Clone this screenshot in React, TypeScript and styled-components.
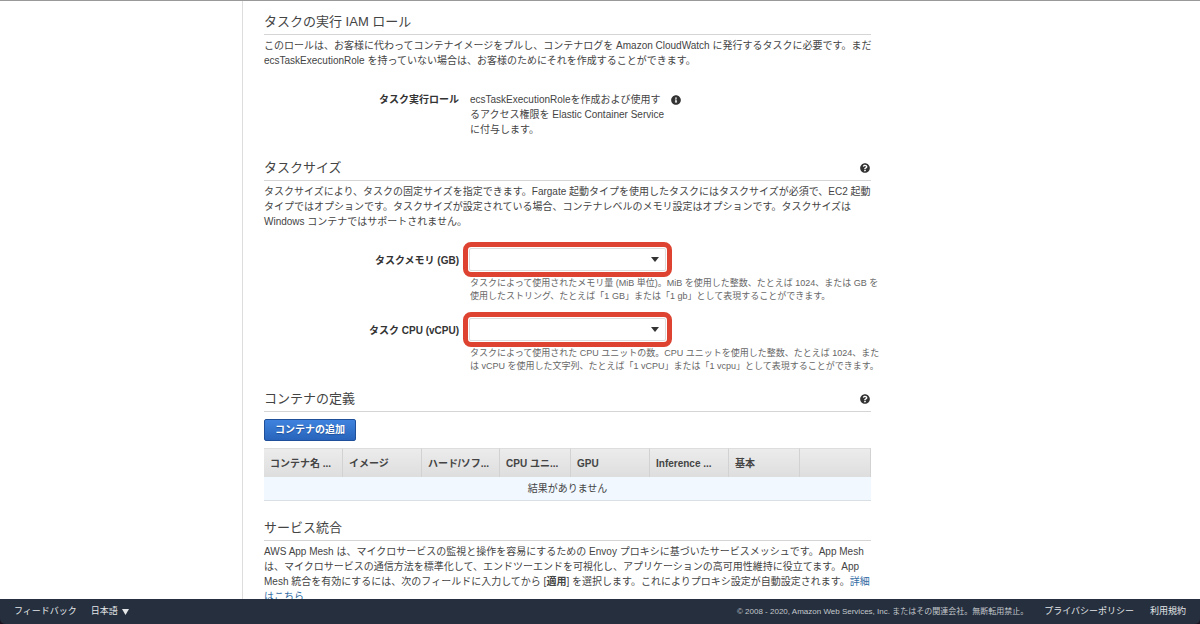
import React from "react";
import styled, { createGlobalStyle } from "styled-components";
import { FaInfoCircle, FaQuestionCircle } from "react-icons/fa";

const GlobalStyle = createGlobalStyle`
  *, *::before, *::after { box-sizing: border-box; }
  body {
    margin: 0;
    background: #1c1220;
    color: #444;
    font-family: "Liberation Sans", "Noto Sans CJK JP", sans-serif;
    font-size: 10px;
    line-height: 15px;
  }
`;

const Shell = styled.div`
  display: flex;
  flex-direction: column;
  height: 100vh;
`;

const Scroller = styled.div`
  flex: 1;
  min-height: 0;
  display: flex;
  background: #fff;
  border-top: 1px solid #999;
  overflow-y: auto;
  scrollbar-width: none;
`;

const SideRail = styled.div`
  flex: 0 0 242px;
`;

const Main = styled.main`
  flex: 1;
  min-width: 0;
  height: max-content;
  border-left: 1px solid #ddd;
  padding: 12px 22px 24px 21px;
`;

const Section = styled.section<{ $after: number }>`
  max-width: 607px;
  margin-bottom: ${(p) => p.$after}px;
`;

const SectionHead = styled.div`
  display: flex;
  align-items: center;
  justify-content: space-between;
  height: 22px;
  padding: 0 1px 3px 0;
  border-bottom: 1px solid #d5d5d5;
`;

const Title = styled.h2`
  margin: 0;
  font-size: 13px;
  font-weight: 400;
  line-height: 18px;
  white-space: nowrap;
`;

const IconButton = styled.button`
  display: flex;
  padding: 0;
  border: 0;
  background: none;
  color: #333;
  font-size: 10px;
`;

const Text = styled.p`
  margin: 3px 0 0;
  white-space: nowrap;
`;

const Row = styled.div<{ $before: number }>`
  display: grid;
  grid-template-columns: 195px 1fr;
  column-gap: 11px;
  margin-top: ${(p) => p.$before}px;
`;

const Label = styled.label<{ $lines: number }>`
  color: #333;
  font-weight: 700;
  line-height: ${(p) => p.$lines}px;
  text-align: right;
`;

const RoleValue = styled.div`
  display: flex;
  align-items: flex-start;
  white-space: nowrap;
`;

const RoleText = styled.div`
  width: 201px;
`;

const InfoButton = styled(IconButton)`
  margin-top: 3px;
`;

const Highlight = styled.div`
  display: flex;
  width: 209px;
  height: 35px;
  margin-left: -7px;
  padding: 1px;
  border: 5px solid #dd4330;
  border-radius: 8px;
`;

const Select = styled.select`
  flex: 1;
  appearance: none;
  border: 1px solid #ddd;
  border-radius: 2px;
  color: #333;
  font: inherit;
  padding: 0 20px 0 6px;
  background: #fff
    url("data:image/svg+xml,%3Csvg xmlns='http://www.w3.org/2000/svg' width='8' height='5'%3E%3Cpath d='M0 0h8L4 5z' fill='%23333'/%3E%3C/svg%3E")
    no-repeat right 6px center;
`;

const Hint = styled.p`
  margin: 0;
  color: #666;
  font-size: 9px;
  line-height: 13px;
  white-space: nowrap;
`;

const PrimaryButton = styled.button`
  display: block;
  height: 22px;
  margin: 7px 0;
  padding: 0 10px;
  border: 1px solid #1f4f99;
  border-radius: 2px;
  background: linear-gradient(#3f83de, #2864bb);
  color: #fff;
  font: inherit;
  font-weight: 700;
  line-height: 18px;
  text-shadow: 0 1px 1px #1f4f99;
`;

const Table = styled.table`
  width: 100%;
  table-layout: fixed;
  border-spacing: 0;
`;

const Col = styled.col<{ $width?: number }>`
  width: ${(p) => (p.$width ? `${p.$width}px` : "auto")};
`;

const HeadCell = styled.th`
  height: 29px;
  padding: 0 6px;
  border-top: 1px solid #ddd;
  border-right: 1px solid #d2d2d2;
  background: linear-gradient(#ececec, #dedede);
  color: #444;
  text-align: left;
  white-space: nowrap;
  overflow: hidden;
`;

const EmptyCell = styled.td`
  height: 24px;
  padding: 0;
  border-bottom: 1px solid #d8e0e6;
  background: #f1f8ff;
  text-align: center;
`;

const Link = styled.a`
  color: #2f6ba3;
  text-decoration: none;
`;

const Footer = styled.footer`
  flex: 0 0 25px;
  display: flex;
  align-items: center;
  justify-content: space-between;
  padding: 0 14px;
  border-radius: 0 0 5px 5px;
  background: #252f3e;
  color: #e4e6e8;
  font-size: 9px;
  line-height: 13px;
  white-space: nowrap;
`;

const FooterGroup = styled.div<{ $gap: number }>`
  display: flex;
  align-items: center;
  gap: ${(p) => p.$gap}px;
`;

const FooterLink = styled.a`
  color: inherit;
  text-decoration: none;
`;

const LanguageButton = styled.button`
  display: flex;
  align-items: center;
  gap: 4px;
  padding: 0;
  border: 0;
  background: none;
  color: inherit;
  font: inherit;
`;

const Copyright = styled.span`
  color: #c3c7cb;
  font-size: 8px;
`;

const columns: { label: string; width?: number }[] = [
  { label: "コンテナ名 ...", width: 79 },
  { label: "イメージ", width: 79 },
  { label: "ハード/ソフ...", width: 78 },
  { label: "CPU ユニ...", width: 71 },
  { label: "GPU", width: 79 },
  { label: "Inference ...", width: 79 },
  { label: "基本", width: 71 },
  { label: "" },
];

function Help({ topic }: { topic: string }) {
  return (
    <IconButton type="button" aria-label={`${topic} のヘルプ`}>
      <FaQuestionCircle />
    </IconButton>
  );
}

export default function App() {
  return (
    <Shell lang="ja">
      <GlobalStyle />
      <Scroller>
        <SideRail />
        <Main>
          <Section $after={22}>
            <SectionHead>
              <Title>タスクの実行 IAM ロール</Title>
            </SectionHead>
            <Text>
              このロールは、お客様に代わってコンテナイメージをプルし、コンテナログを Amazon CloudWatch に発行するタスクに必要です。まだ
              <br />
              ecsTaskExecutionRole を持っていない場合は、お客様のためにそれを作成することができます。
            </Text>
            <Row $before={24}>
              <Label as="div" $lines={15}>タスク実行ロール</Label>
              <RoleValue>
                <RoleText>
                  ecsTaskExecutionRoleを作成および使用す
                  <br />
                  るアクセス権限を Elastic Container Service
                  <br />
                  に付与します。
                </RoleText>
                <InfoButton type="button" aria-label="タスク実行ロールの情報">
                  <FaInfoCircle />
                </InfoButton>
              </RoleValue>
            </Row>
          </Section>

          <Section $after={17}>
            <SectionHead>
              <Title>タスクサイズ</Title>
              <Help topic="タスクサイズ" />
            </SectionHead>
            <Text>
              タスクサイズにより、タスクの固定サイズを指定できます。Fargate 起動タイプを使用したタスクにはタスクサイズが必須で、EC2 起動
              <br />
              タイプではオプションです。タスクサイズが設定されている場合、コンテナレベルのメモリ設定はオプションです。タスクサイズは
              <br />
              Windows コンテナではサポートされません。
            </Text>
            <Row $before={13}>
              <Label htmlFor="memory" $lines={38}>タスクメモリ (GB)</Label>
              <div>
                <Highlight>
                  <Select id="memory" />
                </Highlight>
                <Hint>
                  タスクによって使用されたメモリ量 (MiB 単位)。MiB を使用した整数、たとえば 1024、または GB を
                  <br />
                  使用したストリング、たとえば「1 GB」または「1 gb」として表現することができます。
                </Hint>
              </div>
            </Row>
            <Row $before={9}>
              <Label htmlFor="cpu" $lines={38}>タスク CPU (vCPU)</Label>
              <div>
                <Highlight>
                  <Select id="cpu" />
                </Highlight>
                <Hint>
                  タスクによって使用された CPU ユニットの数。CPU ユニットを使用した整数、たとえば 1024、また
                  <br />
                  は vCPU を使用した文字列、たとえば「1 vCPU」または「1 vcpu」として表現することができます。
                </Hint>
              </div>
            </Row>
          </Section>

          <Section $after={18}>
            <SectionHead>
              <Title>コンテナの定義</Title>
              <Help topic="コンテナの定義" />
            </SectionHead>
            <PrimaryButton type="button">コンテナの追加</PrimaryButton>
            <Table>
              <colgroup>
                {columns.map((c, i) => (
                  <Col key={i} $width={c.width} />
                ))}
              </colgroup>
              <thead>
                <tr>
                  {columns.map((c, i) => (
                    <HeadCell key={i} scope="col">{c.label}</HeadCell>
                  ))}
                </tr>
              </thead>
              <tbody>
                <tr>
                  <EmptyCell colSpan={columns.length}>結果がありません</EmptyCell>
                </tr>
              </tbody>
            </Table>
          </Section>

          <Section $after={0}>
            <SectionHead>
              <Title>サービス統合</Title>
            </SectionHead>
            <Text>
              AWS App Mesh は、マイクロサービスの監視と操作を容易にするための Envoy プロキシに基づいたサービスメッシュです。App Mesh
              <br />
              は、マイクロサービスの通信方法を標準化して、エンドツーエンドを可視化し、アプリケーションの高可用性維持に役立てます。App
              <br />
              Mesh 統合を有効にするには、次のフィールドに入力してから [<b>適用</b>] を選択します。これによりプロキシ設定が自動設定されます。
              <Link href="#app-mesh">
                詳細
                <br />
                はこちら
              </Link>
            </Text>
          </Section>
        </Main>
      </Scroller>
      <Footer>
        <FooterGroup $gap={14}>
          <FooterLink href="#feedback">フィードバック</FooterLink>
          <LanguageButton type="button">
            日本語
            <svg width="7" height="6" viewBox="0 0 7 6" aria-hidden="true">
              <path d="M0 0h7L3.500 6z" fill="currentColor" />
            </svg>
          </LanguageButton>
        </FooterGroup>
        <FooterGroup $gap={16}>
          <Copyright>© 2008 - 2020, Amazon Web Services, Inc. またはその関連会社。無断転用禁止。</Copyright>
          <FooterLink href="#privacy">プライバシーポリシー</FooterLink>
          <FooterLink href="#terms">利用規約</FooterLink>
        </FooterGroup>
      </Footer>
    </Shell>
  );
}
